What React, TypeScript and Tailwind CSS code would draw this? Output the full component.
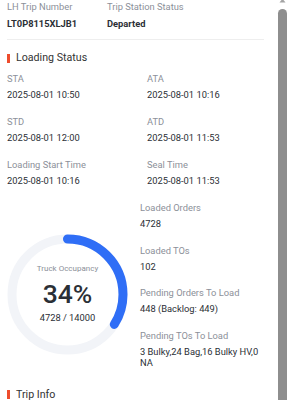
import React from "react";

const label = "text-[9.33px] leading-[10.67px] text-[#8c9099]";
const value = "mt-[5.33px] text-[9.33px] leading-[10.67px] text-[#2b2f36]";

function Field({ name, val }: { name: string; val: string }) {
  return (
    <div>
      <div className={label}>{name}</div>
      <div className={value}>{val}</div>
    </div>
  );
}

function SectionTitle({ title }: { title: string }) {
  return (
    <div className="flex items-center gap-[6px] h-[16px]">
      <span className="w-[3px] h-[9px] bg-[#ee4d2d]"></span>
      <span className="text-[10.67px] leading-[16px] text-[#333333]">{title}</span>
    </div>
  );
}

function OccupancyRing({ percent }: { percent: number }) {
  const r = 55.5;
  const c = 2 * Math.PI * r;
  return (
    <div className="grid w-[121px] h-[121px]">
      <svg width="121" height="121" viewBox="0 0 121 121" className="[grid-area:1/1]">
        <circle cx="60.5" cy="60.5" r={r} fill="none" stroke="#f2f4f8" strokeWidth="9" />
        <circle
          cx="60.5"
          cy="60.5"
          r={r}
          fill="none"
          stroke="#2f6ef6"
          strokeWidth="9"
          strokeLinecap="round"
          strokeDasharray={`${(c * percent) / 100} ${c}`}
          transform="rotate(-90 60.5 60.5)"
        />
      </svg>
      <div className="[grid-area:1/1] flex flex-col items-center justify-center">
        <div className="text-[8px] leading-[10px] text-[#8c9099]">Truck Occupancy</div>
        <div className="mt-[5px] text-[26.5px] leading-[30px] font-medium text-[#2b2f36]">{percent}%</div>
        <div className="mt-[3px] text-[9.33px] leading-[12px] text-[#2b2f36]">4728 / 14000</div>
      </div>
    </div>
  );
}

export default function App() {
  return (
    <div className="flex w-[290px] h-[400px] overflow-hidden bg-white font-[Roboto,sans-serif]">
      <div className="w-[278px] pl-[7px] pr-[14px] pt-[2px]">
        {/* header */}
        <div className="flex">
          <div className="w-[100px]">
            <div className={label}>LH Trip Number</div>
            <div className="mt-[6.5px] text-[9.33px] leading-[10.67px] font-bold text-[#2b2f36]">LT0P8115XLJB1</div>
          </div>
          <div>
            <div className={label}>Trip Station Status</div>
            <div className="mt-[6.5px] text-[9.33px] leading-[10.67px] font-bold text-[#2b2f36]">Departed</div>
          </div>
        </div>
        <div className="mt-[9px] h-px bg-[#eeeeee]"></div>

        <div className="mt-[10.5px]">
          <SectionTitle title="Loading Status" />
        </div>

        <div className="mt-[7.5px] grid grid-cols-[140px_1fr] gap-y-[16.5px]">
          <Field name="STA" val="2025-08-01 10:50" />
          <Field name="ATA" val="2025-08-01 10:16" />
          <Field name="STD" val="2025-08-01 12:00" />
          <Field name="ATD" val="2025-08-01 11:53" />
          <Field name="Loading Start Time" val="2025-08-01 10:16" />
          <Field name="Seal Time" val="2025-08-01 11:53" />
        </div>

        <div className="mt-[16px] flex gap-[12px]">
          <div className="mt-[31px]">
            <OccupancyRing percent={34} />
          </div>
          <div className="flex-1 flex flex-col gap-y-[16px]">
            <Field name="Loaded Orders" val="4728" />
            <Field name="Loaded TOs" val="102" />
            <Field name="Pending Orders To Load" val="448 (Backlog: 449)" />
            <Field name="Pending TOs To Load" val="3 Bulky,24 Bag,16 Bulky HV,0 NA" />
          </div>
        </div>

        <div className="mt-[18.5px]">
          <SectionTitle title="Trip Info" />
        </div>
      </div>

      {/* scrollbar */}
      <div className="w-[9px] flex flex-col items-center">
        <svg width="9" height="4" viewBox="0 0 9 4">
          <polygon points="1.5,2.5 7.5,2.5 5.5,0 3.5,0" fill="#a3a3a3" />
        </svg>
        <div className="mt-[5px] w-[9px] flex-1 rounded-t-[4.5px] bg-[#8e8e8e]"></div>
      </div>
    </div>
  );
}
